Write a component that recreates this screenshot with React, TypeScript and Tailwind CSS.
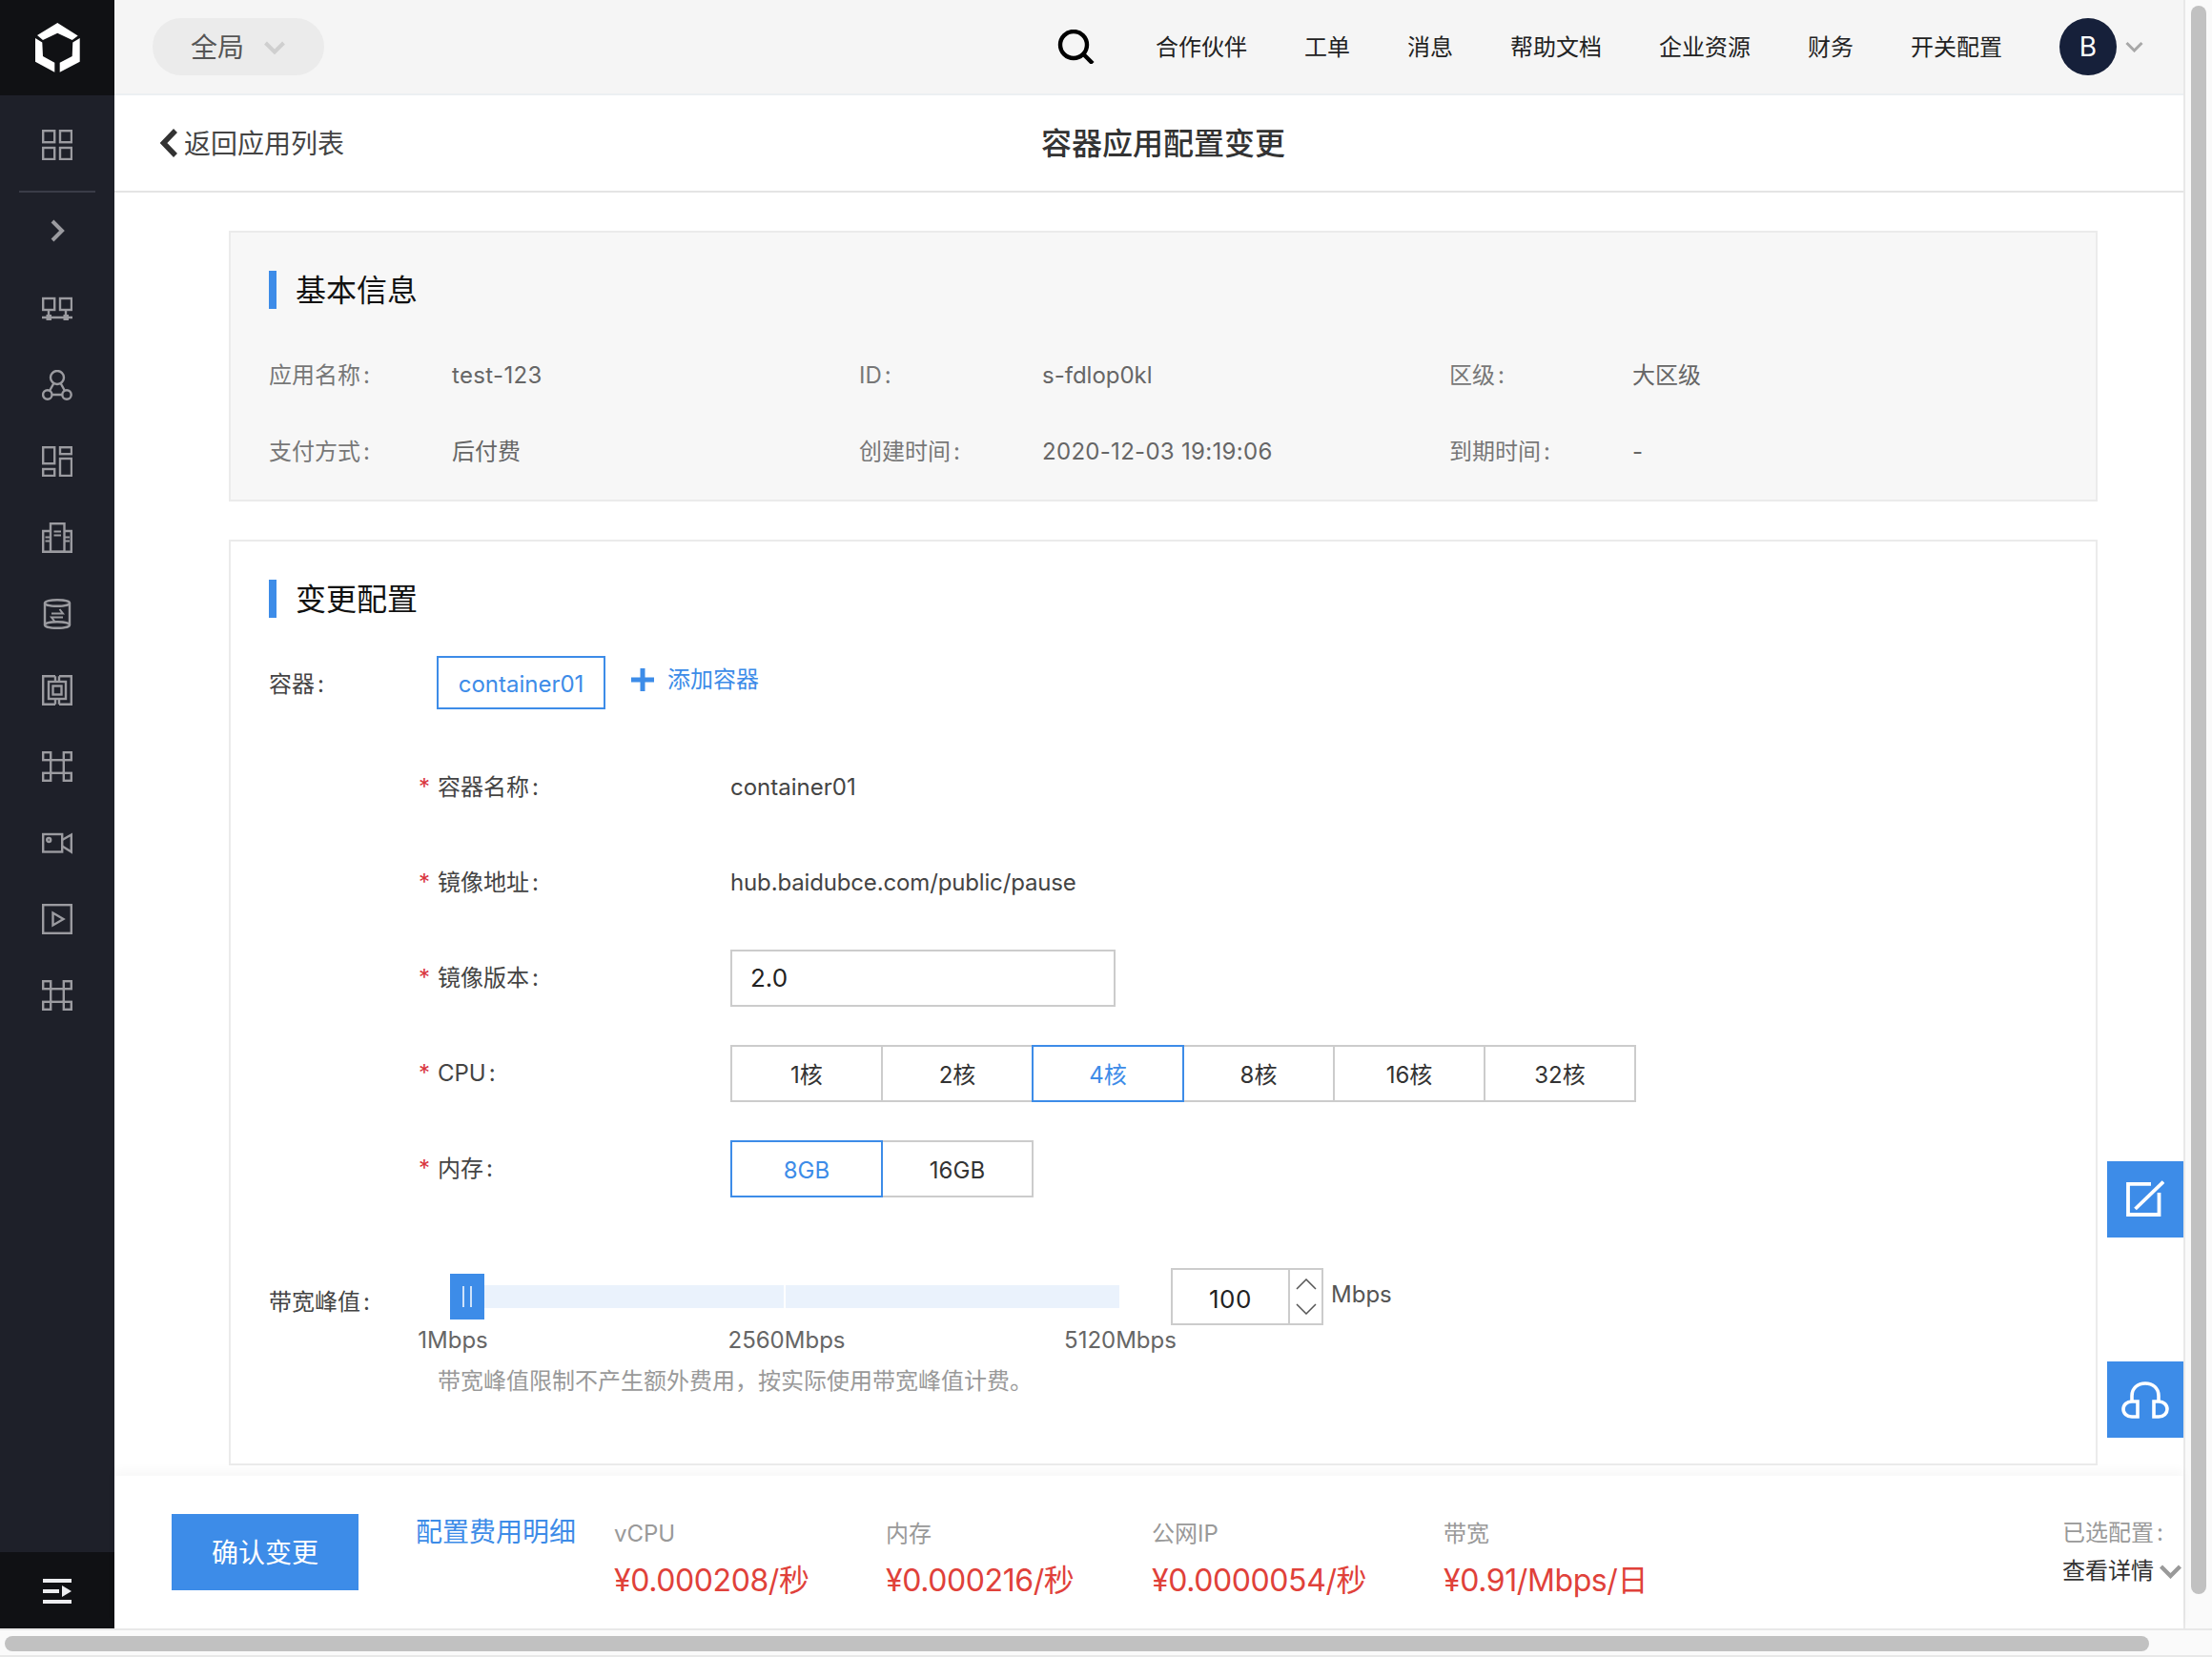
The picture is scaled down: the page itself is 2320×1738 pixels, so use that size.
import type { ReactNode } from 'react';

function Glyph({ children }: { children: ReactNode }) {
  return (
    <svg width="32" height="32" viewBox="0 0 32 32" fill="none" stroke="#9b9ba0" strokeWidth="2.4">
      {children}
    </svg>
  );
}

const navIcons: ReactNode[] = [
  <>
    <rect x="1.2" y="5" width="12" height="12" />
    <rect x="19" y="5" width="12" height="12" />
    <path d="M0 25H32M7 17V25M25 17V25" />
    <rect x="4.5" y="22" width="5.5" height="6" fill="#9b9ba0" stroke="none" />
    <rect x="22.5" y="22" width="5.5" height="6" fill="#9b9ba0" stroke="none" />
  </>,
  <>
    <circle cx="16" cy="8" r="7" />
    <circle cx="5.8" cy="26" r="4.7" />
    <circle cx="26" cy="26" r="4.7" />
    <path d="M10.5 26H21.3M12.4 14L8 22M19.6 14L24 22" />
  </>,
  <>
    <rect x="1.2" y="1.2" width="12" height="17" />
    <rect x="19" y="1.2" width="12" height="7" />
    <rect x="1.2" y="24" width="12" height="7" />
    <rect x="19" y="13" width="12" height="18" />
  </>,
  <>
    <rect x="9" y="1.2" width="14.5" height="29.6" />
    <path d="M9 9H1.2V30.8H30.8V9H23.5" />
    <path d="M12.5 9.5H20M12.5 13.5H20M3.5 15.5H9M3.5 19.5H9M23.5 15.5H29M23.5 19.5H29" strokeWidth="1.8" />
  </>,
  <>
    <ellipse cx="16" cy="4.5" rx="13" ry="3.3" />
    <ellipse cx="16" cy="27.5" rx="13" ry="3.3" />
    <path d="M3 4.5V27.5M29 4.5V27.5" />
    <path d="M10 15.5H22L18.5 11M22 19.5H10L13.5 24" strokeWidth="2" />
  </>,
  <>
    <path d="M14 1.2H1.2V30.8H14M18 1.2H30.8V30.8H18M14 1.2V7M18 1.2V7M14 25V30.8M18 25V30.8" />
    <rect x="7" y="7" width="18" height="18" />
    <rect x="11.5" y="11.5" width="9" height="9" />
  </>,
  <>
    <rect x="1.2" y="1.2" width="8" height="8" />
    <rect x="22.8" y="1.2" width="8" height="8" />
    <rect x="1.2" y="22.8" width="8" height="8" />
    <rect x="22.8" y="22.8" width="8" height="8" />
    <rect x="9.2" y="9.2" width="13.6" height="13.6" />
  </>,
  <>
    <rect x="1.2" y="7" width="20" height="18.5" />
    <path d="M21.2 13L30.8 7.5V25.5L21.2 19.5" />
    <circle cx="7.2" cy="13" r="2" />
  </>,
  <>
    <rect x="1.2" y="1.2" width="29.6" height="29.6" />
    <path d="M11.5 9.5L22.5 16L11.5 22.5Z" />
  </>,
  <>
    <rect x="1.2" y="1.2" width="8" height="8" />
    <rect x="22.8" y="1.2" width="8" height="8" />
    <rect x="1.2" y="22.8" width="8" height="8" />
    <rect x="22.8" y="22.8" width="8" height="8" />
    <rect x="9.2" y="9.2" width="13.6" height="13.6" />
  </>,
];

function Sidebar() {
  return (
    <aside className="w-[120px] shrink-0 flex flex-col bg-[#1e2029]">
      <div className="h-[100px] shrink-0 bg-[#101114] flex items-center justify-center">
        <svg width="47" height="52" viewBox="38 24.3 47 52" fill="#ffffff">
          <path d="M61.3 24.3L82.7 37.7L76.7 42.3L61.3 35L46 42.3L40 37.3Z" />
          <path d="M38 40.3L45.3 44.7L46 59.3L58.3 66V76L38 65Z" />
          <path d="M84.7 40.3L77.3 44.7L76.7 59.3L63.7 66V76L84.7 65Z" />
        </svg>
      </div>
      <div className="h-[100px] shrink-0 pt-[4px] flex items-center justify-center">
        <Glyph>
          <rect x="1.2" y="1.2" width="12" height="12" />
          <rect x="19" y="1.2" width="12" height="12" />
          <rect x="1.2" y="19" width="12" height="12" />
          <rect x="19" y="19" width="12" height="12" />
        </Glyph>
      </div>
      <div className="mx-5 h-[2px] shrink-0 bg-[#3a3c47]" />
      <div className="h-[82px] shrink-0 pb-[2px] flex items-center justify-center">
        <svg width="16" height="24" viewBox="0 0 16 24" fill="none" stroke="#9b9ba0" strokeWidth="4">
          <path d="M3 2L13 12L3 22" />
        </svg>
      </div>
      {navIcons.map((icon, i) => (
        <div key={i} className="h-[80px] shrink-0 flex items-center justify-center">
          <Glyph>{icon}</Glyph>
        </div>
      ))}
      <div className="mt-auto h-[80px] shrink-0 pt-[2px] bg-[#101114] flex items-center justify-center">
        <svg width="30" height="26" viewBox="0 0 30 26" fill="#ecedf0">
          <rect x="0" y="0" width="30" height="4" />
          <rect x="0" y="11" width="17" height="4" />
          <rect x="0" y="22" width="30" height="4" />
          <path d="M20 7L30 13L20 19Z" />
        </svg>
      </div>
    </aside>
  );
}

function TopBar() {
  const links = ['合作伙伴', '工单', '消息', '帮助文档', '企业资源', '财务', '开关配置'];
  return (
    <header className="h-[100px] shrink-0 bg-[#f5f5f5] border-b-2 border-[#eceff2] flex items-center pl-10 pr-[42px]">
      <div className="w-[180px] h-[60px] rounded-full bg-[#ebebeb] flex items-center pl-10 pt-[1px] text-[28px]/[40px] text-[#555]">
        全局
        <svg className="ml-[21px]" width="22" height="14" viewBox="0 0 22 14" fill="none" stroke="#cfcfcf" strokeWidth="4">
          <path d="M1.5 2L11 11.5L20.5 2" />
        </svg>
      </div>
      <svg className="ml-auto" width="39" height="36" viewBox="0 0 39 36" fill="none" stroke="#000" strokeWidth="4.4">
        <circle cx="17" cy="16" r="14" />
        <path d="M27.5 26L37 35.5" />
      </svg>
      <nav className="ml-[64px] pt-[2px] flex items-center gap-[60px] text-[24px]/[34px] text-[#222]">
        {links.map(l => (
          <span key={l}>{l}</span>
        ))}
      </nav>
      <div className="ml-[60px] w-[60px] h-[60px] rounded-full bg-[#16203a] flex items-center justify-center text-[28px] text-white">
        B
      </div>
      <svg className="ml-[9px]" width="19" height="12" viewBox="0 0 19 12" fill="none" stroke="#a8a8a8" strokeWidth="3">
        <path d="M1.5 2L9.5 10L17.5 2" />
      </svg>
    </header>
  );
}

function SubHeader() {
  return (
    <div className="h-[102px] shrink-0 border-b-2 border-[#e4e4e4] flex items-center pl-[47px]">
      <div className="w-[925px] flex items-center text-[28px]/[40px] text-[#444]">
        <svg width="20" height="30" viewBox="0 0 20 30" fill="none" stroke="#333" strokeWidth="5.5">
          <path d="M17 2L4.5 15L17 28" />
        </svg>
        <span className="ml-[6px] pt-[1px]">返回应用列表</span>
      </div>
      <h1 className="pt-[2px] text-[32px]/[44px] font-medium text-[#333]">容器应用配置变更</h1>
    </div>
  );
}

function SectionTitle({ children }: { children: ReactNode }) {
  return (
    <div className="flex items-center h-10">
      <span className="w-2 h-10 bg-[#3d8ce8]" />
      <h2 className="ml-5 pt-[2px] text-[32px]/[40px] text-[#111]">{children}</h2>
    </div>
  );
}

function Colon() {
  return <span className="ml-[3px]">:</span>;
}

function InfoItem({ label, value, valueClass = '' }: { label: string; value: string; valueClass?: string }) {
  return (
    <div className="flex h-10 items-center text-[24px]/[40px]">
      <span className="w-[192px] text-[#777]">
        {label}
        <Colon />
      </span>
      <span className={`text-[#666] ${valueClass}`}>{value}</span>
    </div>
  );
}

function BasicInfo() {
  return (
    <section className="h-[284px] border-2 border-[#ebebeb] bg-[#f7f7f7] pt-10 pl-10">
      <SectionTitle>基本信息</SectionTitle>
      <div className="mt-[50px] grid grid-cols-[repeat(3,619px)] gap-y-10">
        <InfoItem label="应用名称" value="test-123" valueClass="tracking-[0.35px]" />
        <InfoItem label="ID" value="s-fdlop0kl" />
        <InfoItem label="区级" value="大区级" />
        <InfoItem label="支付方式" value="后付费" />
        <InfoItem label="创建时间" value="2020-12-03 19:19:06" valueClass="tracking-[0.3px]" />
        <InfoItem label="到期时间" value="-" />
      </div>
    </section>
  );
}

function FormRow({ label, children }: { label: string; children: ReactNode }) {
  return (
    <div className="h-[60px] flex items-center text-[24px]/[34px]">
      <span className="ml-[157px] w-5 text-[#d9363e]">*</span>
      <span className="w-[307px] text-[#444]">
        {label}
        <Colon />
      </span>
      {children}
    </div>
  );
}

function Options({ items, active }: { items: string[]; active: string }) {
  return (
    <div className="flex">
      {items.map((o, i) => (
        <div
          key={o}
          className={`w-[160px] h-[60px] pt-[3px] border-2 flex items-center justify-center ${i > 0 ? '-ml-[2px]' : ''} ${
            o === active ? 'relative z-10 border-[#3d8ce8] text-[#3d8ce8]' : 'border-[#cccccc] text-[#333]'
          }`}
        >
          {o}
        </div>
      ))}
    </div>
  );
}

function Bandwidth() {
  return (
    <div className="mt-[74px]">
      <div className="flex items-center h-[60px]">
        <span className="w-[190px] mt-3 text-[24px]/[34px] text-[#444]">
          带宽峰值
          <Colon />
        </span>
        <div className="relative w-[702px] h-6 bg-[#eaf2fc]">
          <span className="absolute left-[350px] top-0 w-[2px] h-6 bg-white" />
          <span className="absolute left-0 -top-3 w-9 h-12 bg-[#3d8ce8] flex items-center justify-center gap-[6px]">
            <i className="w-[2px] h-[22px] bg-[#cfe2fa]" />
            <i className="w-[2px] h-[22px] bg-[#cfe2fa]" />
          </span>
        </div>
        <div className="ml-[54px] w-40 h-[60px] border-2 border-[#cccccc] flex">
          <div className="w-[121px] pt-1 flex items-center justify-center tracking-[0.5px] text-[26px] text-[#222]">100</div>
          <div className="flex-1 border-l-2 border-[#cccccc] flex flex-col items-center justify-center gap-[14px]">
            <svg width="22" height="12" viewBox="0 0 22 12" fill="none" stroke="#555" strokeWidth="1.5">
              <path d="M1 11L11 1L21 11" />
            </svg>
            <svg width="22" height="12" viewBox="0 0 22 12" fill="none" stroke="#555" strokeWidth="1.5">
              <path d="M1 1L11 11L21 1" />
            </svg>
          </div>
        </div>
        <span className="ml-2 -mt-1 text-[24px]/[34px] text-[#555]">Mbps</span>
      </div>
      <div className="ml-[123px] -mt-[1px] flex gap-[210px] text-[24px]/[34px] text-[#666]">
        <span className="w-[140px] text-center">1Mbps</span>
        <span className="w-[140px] text-center">2560Mbps</span>
        <span className="w-[140px] text-center">5120Mbps</span>
      </div>
      <p className="ml-[177px] mt-[9px] text-[24px]/[34px] text-[#999]">
        带宽峰值限制不产生额外费用，按实际使用带宽峰值计费。
      </p>
    </div>
  );
}

function ChangeConfig() {
  return (
    <section className="mt-10 h-[971px] border-2 border-[#ebebeb] pt-10 pl-10">
      <SectionTitle>变更配置</SectionTitle>
      <div className="mt-10 flex items-center h-14 text-[24px]/[34px]">
        <span className="w-[176px] pt-[3px] text-[#444]">
          容器
          <Colon />
        </span>
        <div className="w-[177px] h-14 pt-[3px] border-2 border-[#3d8ce8] flex items-center justify-center text-[#3d8ce8]">
          container01
        </div>
        <svg className="ml-[27px] -mt-[6px]" width="24" height="24" viewBox="0 0 24 24" fill="#3d8ce8">
          <rect x="0" y="9.5" width="24" height="5" />
          <rect x="9.5" y="0" width="5" height="24" />
        </svg>
        <span className="ml-[14px] -mt-[6px] text-[#3d8ce8]">添加容器</span>
      </div>
      <div className="mt-[52px] flex flex-col gap-10">
        <FormRow label="容器名称">
          <span className="text-[#444]">container01</span>
        </FormRow>
        <FormRow label="镜像地址">
          <span className="tracking-[-0.15px] text-[#444]">hub.baidubce.com/public/pause</span>
        </FormRow>
        <FormRow label="镜像版本">
          <div className="w-[404px] h-[60px] border-2 border-[#cccccc] pl-[19px] flex items-center text-[26px] text-[#222]">
            2.0
          </div>
        </FormRow>
        <FormRow label="CPU">
          <Options items={['1核', '2核', '4核', '8核', '16核', '32核']} active="4核" />
        </FormRow>
        <FormRow label="内存">
          <Options items={['8GB', '16GB']} active="8GB" />
        </FormRow>
      </div>
      <Bandwidth />
    </section>
  );
}

function Price({ label, value, width }: { label: string; value: string; width: string }) {
  return (
    <div className={width}>
      <div className="mt-1 text-[24px]/[34px] text-[#999]">{label}</div>
      <div className="mt-[10px] text-[32px]/[44px] tracking-[-0.4px] text-[#e0413a]">{value}</div>
    </div>
  );
}

function Footer() {
  return (
    <footer className="relative z-10 h-[160px] shrink-0 bg-white shadow-[0_-6px_10px_rgba(0,0,0,0.03)] flex pt-10 pl-[60px]">
      <button className="w-[196px] h-20 pt-[2px] bg-[#3d8ce8] text-white text-[28px]/[40px]">确认变更</button>
      <a className="ml-[60px] mt-[1px] w-[208px] text-[28px]/[36px] text-[#3d8ce8]">配置费用明细</a>
      <Price label="vCPU" value="¥0.000208/秒" width="w-[285px]" />
      <Price label="内存" value="¥0.000216/秒" width="w-[279px]" />
      <Price label="公网IP" value="¥0.0000054/秒" width="w-[306px]" />
      <Price label="带宽" value="¥0.91/Mbps/日" width="w-[649px]" />
      <div className="text-[24px]/[34px]">
        <div className="mt-[3px] text-[#999]">
          已选配置
          <Colon />
        </div>
        <div className="mt-[6px] flex items-center text-[#333]">
          查看详情
          <svg className="ml-[6px]" width="23" height="15" viewBox="0 0 23 15" fill="none" stroke="#9a9a9a" strokeWidth="4.4">
            <path d="M1.5 2L11.5 12L21.5 2" />
          </svg>
        </div>
      </div>
    </footer>
  );
}

function FloatingButtons() {
  return (
    <div className="absolute right-0 top-[1218px] z-20 flex flex-col gap-[130px]">
      <div className="w-20 h-20 bg-[#3d8ce8] flex items-center justify-center">
        <svg width="40" height="40" viewBox="0 0 40 40" fill="none" stroke="#ffffff" strokeWidth="3.8">
          <path d="M26 3.8H2V36H34.5V13" />
          <path d="M9.5 30L39 1.5" />
        </svg>
      </div>
      <div className="w-20 h-20 bg-[#3d8ce8] flex items-center justify-center">
        <svg width="50" height="40" viewBox="0 0 50 40" fill="none" stroke="#ffffff" strokeWidth="3.6">
          <path d="M11 22V16C11 8 17 3 25 3C33 3 39 8 39 16V22" />
          <path d="M17 38V22H11C5.5 22 2 25.5 2 30C2 34.5 5.5 38 11 38Z" />
          <path d="M34 38V22H39C44.5 22 48 25.5 48 30C48 34.5 44.5 38 39 38Z" />
        </svg>
      </div>
    </div>
  );
}

export default function App() {
  return (
    <div className="w-[2320px] h-[1738px] flex flex-col overflow-hidden bg-white [font-family:Inter,'Noto_Sans_CJK_SC',sans-serif]">
      <div className="h-[1708px] flex">
        <Sidebar />
        <main className="relative flex-1 min-w-0 flex flex-col">
          <TopBar />
          <SubHeader />
          <div className="flex-1 min-h-0 overflow-hidden pt-10 pl-[120px] pr-[90px]">
            <BasicInfo />
            <ChangeConfig />
          </div>
          <Footer />
          <FloatingButtons />
        </main>
        <div className="w-[30px] shrink-0 bg-[#fafafa] border-l-2 border-[#e8e8e8] pl-[6px] pt-[6px]">
          <div className="w-4 h-[1666px] rounded-full bg-[#c1c1c1]" />
        </div>
      </div>
      <div className="h-[30px] shrink-0 bg-[#fafafa] border-t-2 border-b-2 border-[#e8e8e8] pt-[6px] pl-[5px]">
        <div className="w-[2249px] h-4 rounded-full bg-[#c1c1c1]" />
      </div>
    </div>
  );
}
